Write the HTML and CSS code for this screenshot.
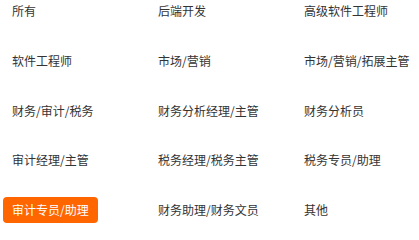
FILE: index.html
```html
<!DOCTYPE html>
<html lang="zh-CN">
<head>
<meta charset="utf-8">
<link rel="stylesheet" href="styles.css">
</head>
<body>
<div class="tags">
  <span class="tag">所有</span>
  <span class="tag">后端开发</span>
  <span class="tag">高级软件工程师</span>
  <span class="tag">软件工程师</span>
  <span class="tag">市场/营销</span>
  <span class="tag">市场/营销/拓展主管</span>
  <span class="tag">财务/审计/税务</span>
  <span class="tag">财务分析经理/主管</span>
  <span class="tag">财务分析员</span>
  <span class="tag">审计经理/主管</span>
  <span class="tag">税务经理/税务主管</span>
  <span class="tag">税务专员/助理</span>
  <span class="tag active">审计专员/助理</span>
  <span class="tag">财务助理/财务文员</span>
  <span class="tag">其他</span>
</div>
</body>
</html>
```
FILE: styles.css
```css
html, body {
  margin: 0;
  padding: 0;
  background: #fff;
}
body {
  font-family: "Noto Sans CJK SC", "Liberation Sans", sans-serif;
  font-size: 12px;
  color: #333;
}
.tags {
  display: grid;
  grid-template-columns: repeat(3, 146px);
  row-gap: 23.75px;
  align-items: start;
  justify-items: start;
  margin: -2px 0 0 3px;
}
.tag {
  display: block;
  height: 26px;
  line-height: 26px;
  padding: 0 9px;
  border-radius: 4px;
  white-space: nowrap;
}
.tag.active {
  background: #ff6600;
  color: #fff;
}
```
